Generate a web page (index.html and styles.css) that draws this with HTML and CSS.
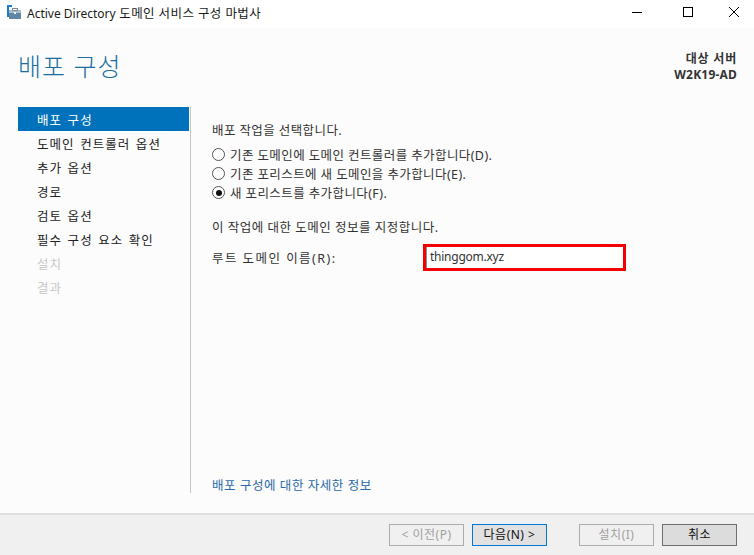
FILE: index.html
```html
<!DOCTYPE html>
<html lang="ko">
<head>
<meta charset="utf-8">
<title>Active Directory 도메인 서비스 구성 마법사</title>
<link rel="stylesheet" href="styles.css">
</head>
<body>
<div class="window">
  <header class="titlebar">
    <svg class="app-icon" width="14" height="14" viewBox="0 0 14 14">
      <rect x="0" y="0" width="5" height="2" fill="#1a7fc4"/>
      <rect x="0" y="2" width="2" height="10" fill="#1a7fc4"/>
      <rect x="2" y="5" width="12" height="3" fill="#a9bccb"/>
      <rect x="2" y="8" width="12" height="6" fill="#5f86a3"/>
      <rect x="5.5" y="3.5" width="5" height="2" fill="none" stroke="#7a8a96" stroke-width="1"/>
      <rect x="7" y="7" width="2" height="2" fill="#eef2f5"/>
    </svg>
    <span class="title-text"><span class="latin">Active Directory</span> 도메인 서비스 구성 마법사</span>
    <div class="win-controls">
      <svg width="46" height="24" viewBox="0 0 46 24"><rect x="16" y="12" width="10" height="1" fill="#000"/></svg>
      <svg width="46" height="24" viewBox="0 0 46 24"><rect x="21.5" y="7.5" width="9" height="9" fill="none" stroke="#000"/></svg>
      <svg width="46" height="24" viewBox="0 0 46 24"><path d="M21 7 L31 17 M31 7 L21 17" stroke="#000" stroke-width="1" fill="none"/></svg>
    </div>
  </header>

  <main class="body">
    <div class="head">
      <h1 class="page-title">배포 구성</h1>
      <div class="target">
        <div class="target-label">대상 서버</div>
        <div>W2K19-AD</div>
      </div>
    </div>
    <div class="columns">
      <nav class="side">
        <div class="step active">배포 구성</div>
        <div class="step">도메인 컨트롤러 옵션</div>
        <div class="step">추가 옵션</div>
        <div class="step">경로</div>
        <div class="step">검토 옵션</div>
        <div class="step">필수 구성 요소 확인</div>
        <div class="step off">설치</div>
        <div class="step off">결과</div>
      </nav>
      <section class="content">
        <div class="form">
          <p class="label">배포 작업을 선택합니다.</p>
          <div class="radios">
            <div class="radio"><span class="dot"></span>기존 도메인에 도메인 컨트롤러를 추가합니다(D).</div>
            <div class="radio"><span class="dot"></span>기존 포리스트에 새 도메인을 추가합니다(E).</div>
            <div class="radio"><span class="dot on"></span>새 포리스트를 추가합니다(F).</div>
          </div>
          <p class="label spec">이 작업에 대한 도메인 정보를 지정합니다.</p>
          <div class="field">
            <span class="field-label">루트 도메인 이름(R):</span>
            <div class="highlight"><div class="input">thinggom.xyz</div></div>
          </div>
        </div>
        <a class="more">배포 구성에 대한 자세한 정보</a>
      </section>
    </div>
  </main>

  <footer class="footer">
    <div class="btn disabled">&lt; 이전(P)</div>
    <div class="btn next">다음(N) &gt;</div>
    <div class="btn disabled install">설치(I)</div>
    <div class="btn cancel">취소</div>
  </footer>
</div>
</body>
</html>
```
FILE: styles.css
```css
* { box-sizing: border-box; }
html, body { margin: 0; padding: 0; }
body {
  width: 754px;
  height: 555px;
  overflow: hidden;
  font-family: "Noto Sans", "Noto Sans CJK KR", sans-serif;
  font-size: 12.5px;
  color: #1c1c1c;
}
.window { display: flex; flex-direction: column; width: 754px; height: 555px; background: #fcfcfc; }

.titlebar { height: 28px; flex: none; background: #fff; display: flex; align-items: center; padding-left: 7px; }
.app-icon { flex: none; margin-right: 6px; margin-top: -4px; }
.title-text { font-size: 12.5px; color: #1a1a1a; margin-top: -3px; letter-spacing: 0.4px; }
.latin { font-size: 12px; letter-spacing: 0; }
.win-controls { margin-left: auto; display: flex; margin-top: -4px; }
.win-controls svg { display: block; }

.body { flex: 1; display: flex; flex-direction: column; min-height: 0; }
.head { height: 79px; flex: none; display: flex; justify-content: space-between; padding: 19px 17px 0 18px; }
.page-title { margin: 0; font-size: 25px; font-weight: 300; line-height: 39px; color: #1a6f9f; letter-spacing: 1px; }
.target { text-align: right; font-weight: 700; font-size: 12px; line-height: 16px; color: #333; padding-top: 4px; letter-spacing: 0.2px; }
.target-label { letter-spacing: 0.8px; }

.columns { display: flex; padding-left: 18px; height: 386px; }
.side { width: 172px; flex: none; }
.step { height: 24px; line-height: 24px; padding: 2px 0 0 19px; letter-spacing: 1.05px; word-spacing: 1.2px; color: #222; }
.step.active { background: #0072bc; color: #fff; width: 171px; }
.step.off { color: #c8c8c8; }

.content { flex: 1; display: flex; flex-direction: column; border-left: 1px solid #c6c6c6; padding-left: 21px; min-width: 0; }
.form { flex: 1; }
.label { margin: 15px 0 0; line-height: 17px; color: #333; letter-spacing: 0.4px; }
.radios { margin-top: 6px; }
.radio { display: flex; align-items: center; height: 19px; color: #333; letter-spacing: 0.4px; }
.dot { width: 13px; height: 13px; border: 1px solid #555; border-radius: 50%; background: #fff; margin-right: 5px; flex: none; position: relative; }
.dot.on::after { content: ""; position: absolute; left: 2.5px; top: 2.5px; width: 6px; height: 6px; border-radius: 50%; background: #111; }
.spec { margin-top: 17px; letter-spacing: 0.5px; }
.field { display: flex; align-items: center; margin-top: 8px; }
.field-label { width: 211px; flex: none; color: #333; letter-spacing: 1.45px; }
.highlight { width: 203px; height: 27px; border: 3px solid #f40000; flex: none; }
.input { height: 21px; border-left: 1px solid #7a90b0; background: #fff; font-size: 12px; line-height: 20px; padding-left: 3px; color: #333; letter-spacing: -0.25px; }
.more { color: #2a6aa8; letter-spacing: 0.55px; line-height: 17px; margin-bottom: -1px; }

.footer { height: 42px; flex: none; background: #f0f0f0; border-top: 2px solid #dfdfdf; display: flex; padding: 9px 17px 0 389px; align-items: flex-start; }
.btn { width: 75px; height: 22px; border: 1px solid #333; font-size: 12px; line-height: 20px; text-align: center; background: #e1e1e1; color: #111; letter-spacing: 0.5px; }
.btn.disabled { background: #f0f0f0; border-color: #adadad; color: #a0a0a0; }
.next { margin-left: 8px; border-color: #0078d7; background: #e1e1e1; }
.install { margin-left: 32px; }
.cancel { margin-left: 8px; border-color: #707070; background: #dcdcdc; }
```
